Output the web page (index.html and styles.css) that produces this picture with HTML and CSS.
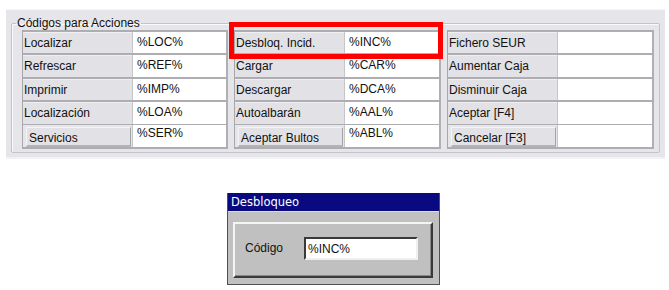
FILE: index.html
```html
<!DOCTYPE html>
<html lang="es">

<head>
  <meta charset="UTF-8" />
  <title>Códigos para Acciones</title>
  <link rel="stylesheet" href="styles.css">
</head>

<body>
  <div class="panel">
    <fieldset class="group">
      <legend>Códigos para Acciones</legend>
      <div class="columns">
        <div class="col">
          <div class="row"><span class="label">Localizar</span><span class="value">%LOC%</span></div>
          <div class="row"><span class="label">Refrescar</span><span class="value">%REF%</span></div>
          <div class="row"><span class="label">Imprimir</span><span class="value">%IMP%</span></div>
          <div class="row"><span class="label">Localización</span><span class="value">%LOA%</span></div>
          <div class="row last"><span class="label">Servicios</span><span class="value">%SER%</span></div>
        </div>
        <div class="col highlighted">
          <div class="row"><span class="label">Desbloq. Incid.</span><span class="value">%INC%</span></div>
          <div class="row"><span class="label">Cargar</span><span class="value">%CAR%</span></div>
          <div class="row"><span class="label">Descargar</span><span class="value">%DCA%</span></div>
          <div class="row"><span class="label">Autoalbarán</span><span class="value">%AAL%</span></div>
          <div class="row last"><span class="label">Aceptar Bultos</span><span class="value">%ABL%</span></div>
          <div class="mark"></div>
        </div>
        <div class="col">
          <div class="row"><span class="label">Fichero SEUR</span><span class="value"></span></div>
          <div class="row"><span class="label">Aumentar Caja</span><span class="value"></span></div>
          <div class="row"><span class="label">Disminuir Caja</span><span class="value"></span></div>
          <div class="row"><span class="label">Aceptar [F4]</span><span class="value"></span></div>
          <div class="row last"><span class="label">Cancelar [F3]</span><span class="value"></span></div>
        </div>
      </div>
    </fieldset>
  </div>

  <div class="dialog">
    <div class="title">Desbloqueo</div>
    <div class="body">
      <div class="inner">
        <span class="field-label">Código</span>
        <span class="field">%INC%</span>
      </div>
    </div>
  </div>
</body>

</html>
```

FILE: styles.css
```css
* {
  box-sizing: border-box;
}

html,
body {
  margin: 0;
  padding: 0;
  background: #fff;
  color: #111;
  font-family: "Liberation Sans", Arial, sans-serif;
  font-size: 12px;
}

.panel {
  width: 659px;
  height: 150px;
  margin: 9px 0 0 6px;
  padding: 6px 5px 0 5px;
  background: #e6e6ea;
  border-top: 1px solid #f6f6f8;
  border-bottom: 2px solid #f2f2f4;
}

.group {
  margin: 0;
  padding: 0 0 5px 10px;
  width: 649px;
  height: 137px;
  border: 1px solid #c4c4c8;
  box-shadow: inset 1px 1px 0 #fafafa;
  border-radius: 2px;
}

.group legend {
  margin-left: -6px;
  padding: 0 1px;
  line-height: 14px;
}

.columns {
  display: flex;
  gap: 6px;
}

.col {
  position: relative;
  width: 207px;
  display: flex;
  flex-direction: column;
  border-left: 1px solid #a8a8ac;
}

.col:first-child {
  width: 206px;
}

.row {
  display: flex;
  height: 23px;
  border-top: 2px solid #aeaeb2;
}

.row:nth-child(2),
.row:nth-child(4) {
  height: 24px;
}

.label {
  width: 109px;
  padding: 3px 0 0 1px;
  background: #e2e2e6;
  border-top: 1px solid #f0f0f2;
  white-space: nowrap;
}

.value {
  flex: 1;
  padding: 3px 0 0 4px;
  background: #fff;
  border-left: 1px solid #c6c6ca;
  border-right: 2px solid #b0b0b4;
}

.row.last {
  height: 25px;
  border-top: 1px solid #aeaeb2;
  border-bottom: 2px solid #aeaeb2;
}

.row.last .label {
  margin: 2px 1px 0 3px;
  width: 105px;
  padding: 3px 0 0 2px;
  border-top: 1px solid #f4f4f6;
  border-left: 1px solid #f4f4f6;
  border-right: 1px solid #a4a4a8;
  border-bottom: 2px solid #b4b4b8;
}

.row.last .value {
  padding-top: 1px;
}

.mark {
  position: absolute;
  left: -6px;
  top: -8px;
  width: 214px;
  height: 37px;
  border: 5px solid #ff0000;
}

.dialog {
  width: 213px;
  height: 92px;
  margin: 34px 0 0 227px;
  background: #c0c0c0;
  border: 1px solid #505050;
  border-top: none;
  display: flex;
  flex-direction: column;
}

.title {
  height: 19px;
  padding: 2px 0 0 3px;
  background: #0a0a80;
  color: #fff;
  font-family: "DejaVu Sans", Verdana, sans-serif;
  font-size: 11.5px;
  border-bottom: 1px solid #dcdcdc;
}

.body {
  flex: 1;
  padding: 10px 6px 6px 5px;
}

.inner {
  height: 56px;
  display: flex;
  align-items: center;
  padding: 0 0 4px 10px;
  border-top: 2px solid #f4f4f4;
  border-left: 2px solid #f4f4f4;
  border-right: 2px solid #3a3a3a;
  border-bottom: 2px solid #3a3a3a;
  box-shadow: inset -1px -1px 0 #8a8a8a;
}

.field-label {
  width: 59px;
  font-size: 12px;
}

.field {
  width: 114px;
  height: 23px;
  padding: 3px 0 0 2px;
  background: #fff;
  border-top: 2px solid #3a3a3a;
  border-left: 2px solid #3a3a3a;
  border-right: 2px solid #f0f0f0;
  border-bottom: 2px solid #f0f0f0;
}
```
